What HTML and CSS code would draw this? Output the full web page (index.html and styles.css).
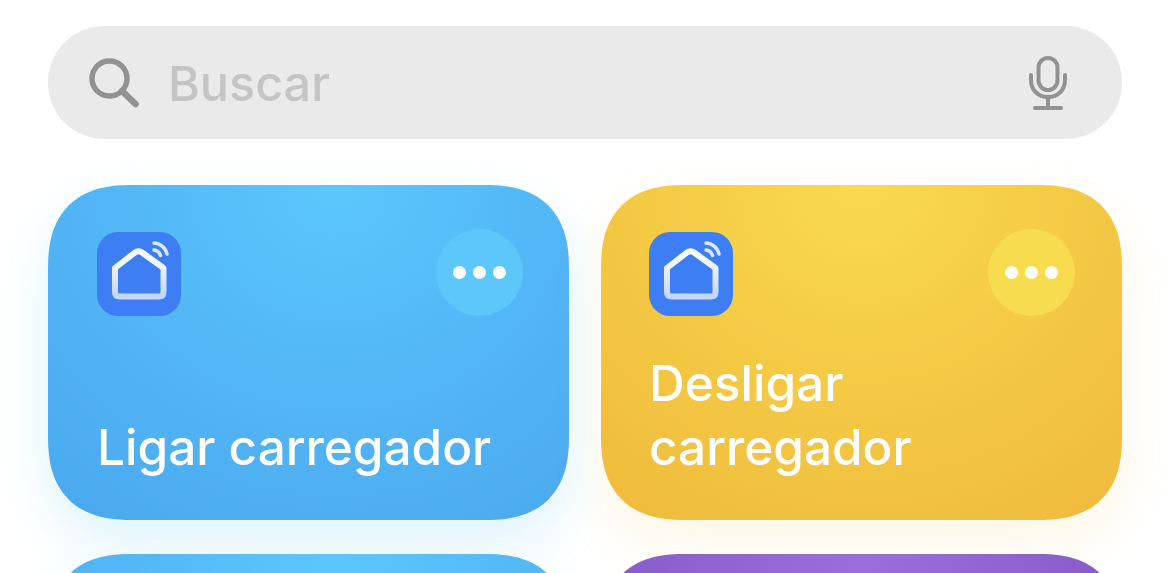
FILE: index.html
```html
<!DOCTYPE html>
<html lang="pt-BR">
<head>
    <meta charset="UTF-8">
    <title>Atalhos</title>
    <link rel="stylesheet" href="styles.css">
</head>
<body>
    <svg class="defs" width="0" height="0">
        <defs>
            <linearGradient id="house-stroke" x1="0" y1="0" x2="0" y2="1">
                <stop offset="0" stop-color="#ffffff"/>
                <stop offset="1" stop-color="#c3d6fb"/>
            </linearGradient>
            <symbol id="app-icon" viewBox="0 0 84 84">
                <rect width="84" height="84" rx="21" fill="#3d7ef5"/>
                <path d="M18 36 L38 20.5 Q41.5 18 45 20.5 L66.5 36 V60 Q66.5 64.5 62 64.5 H22.5 Q18 64.5 18 60 Z" fill="none" stroke="url(#house-stroke)" stroke-width="6" stroke-linejoin="round"/>
                <path d="M57 11 A14 14 0 0 1 70 22" fill="none" stroke="#dbe7fd" stroke-width="3.5" stroke-linecap="round"/>
                <path d="M57 18 A8 8 0 0 1 63.5 23.5" fill="none" stroke="#dbe7fd" stroke-width="3.5" stroke-linecap="round"/>
            </symbol>
        </defs>
    </svg>

    <div class="search-bar">
        <svg class="search-icon" viewBox="0 0 50 50">
            <circle cx="20.5" cy="20.5" r="17.5" fill="none" stroke="#929292" stroke-width="5.5"/>
            <path d="M33 33 L46.5 46" fill="none" stroke="#929292" stroke-width="6.5" stroke-linecap="round"/>
        </svg>
        <span class="search-text">Buscar</span>
        <svg class="mic-icon" viewBox="0 0 38 54">
            <rect x="9.5" y="2" width="19" height="32" rx="9.5" fill="none" stroke="#929292" stroke-width="4"/>
            <path d="M2 19 V24 C2 34 9 41 19 41 C29 41 36 34 36 24 V19" fill="none" stroke="#929292" stroke-width="4" stroke-linecap="round"/>
            <path d="M19 41 V51 M6 52 H32" fill="none" stroke="#929292" stroke-width="4" stroke-linecap="round"/>
        </svg>
    </div>

    <div class="grid">
        <div class="card blue">
            <div class="card-top">
                <svg class="app-icon"><use href="#app-icon"/></svg>
                <div class="more"><i></i><i></i><i></i></div>
            </div>
            <div class="card-title">Ligar carregador</div>
        </div>
        <div class="card yellow">
            <div class="card-top">
                <svg class="app-icon"><use href="#app-icon"/></svg>
                <div class="more"><i></i><i></i><i></i></div>
            </div>
            <div class="card-title">Desligar<br>carregador</div>
        </div>
        <div class="card blue"></div>
        <div class="card purple"></div>
    </div>
</body>
</html>
```

FILE: styles.css
```css
* {
    margin: 0;
    padding: 0;
    box-sizing: border-box;
}

html, body {
    height: 573px;
    overflow: hidden;
}

body {
    background-color: #fff;
    padding: 26px 48px 0;
    font-family: Inter, "Liberation Sans", sans-serif;
}

.defs {
    display: block;
    height: 0;
}

.search-bar {
    display: flex;
    align-items: center;
    height: 113px;
    padding: 0 55px 0 41px;
    background-color: #eaeaea;
    border-radius: 56px;
}

.search-icon {
    width: 50px;
    height: 50px;
}

.search-text {
    margin-left: 29px;
    padding-top: 2px;
    font-size: 48.5px;
    font-weight: 500;
    color: #c4c4c4;
    flex: 1;
}

.mic-icon {
    width: 38px;
    height: 54px;
}

.grid {
    display: grid;
    grid-template-columns: 521px 521px;
    grid-auto-rows: 335px;
    column-gap: 32px;
    row-gap: 34px;
    margin-top: 46px;
}

.card {
    display: flex;
    flex-direction: column;
    justify-content: space-between;
    padding: 44px 46px 41px 49px;
    border-radius: 84px;
    corner-shape: superellipse(1.3);
    color: #fff;
}

.blue {
    background: radial-gradient(ellipse 85% 125% at 55% 0%, #5ac8fc 0%, #53b6f6 50%, #4aa9ee 100%);
    box-shadow: 0 22px 50px rgba(90, 200, 250, 0.2);
}

.yellow {
    padding-left: 48px;
    padding-right: 47px;
    background: radial-gradient(ellipse 85% 125% at 50% 0%, #f9da50 0%, #f4c944 50%, #efba3c 100%);
    box-shadow: 0 22px 50px rgba(245, 200, 80, 0.14);
}

.purple {
    background: radial-gradient(ellipse 70% 125% at 50% 0%, #9a6fdc 0%, #8a5ecb 60%, #7d52c0 100%);
}

.card-top {
    display: flex;
    justify-content: space-between;
    align-items: flex-start;
}

.app-icon {
    width: 84px;
    height: 84px;
    margin-top: 3px;
}

.more {
    display: flex;
    justify-content: center;
    align-items: center;
    gap: 7px;
    width: 87px;
    height: 87px;
    border-radius: 50%;
}

.blue .more {
    background-color: #5dc6fb;
}

.yellow .more {
    background-color: #f8dc50;
}

.more i {
    width: 13px;
    height: 13px;
    border-radius: 50%;
    background-color: #fff;
}

.card-title {
    font-size: 49.5px;
    font-weight: 540;
    line-height: 64px;
}
```
